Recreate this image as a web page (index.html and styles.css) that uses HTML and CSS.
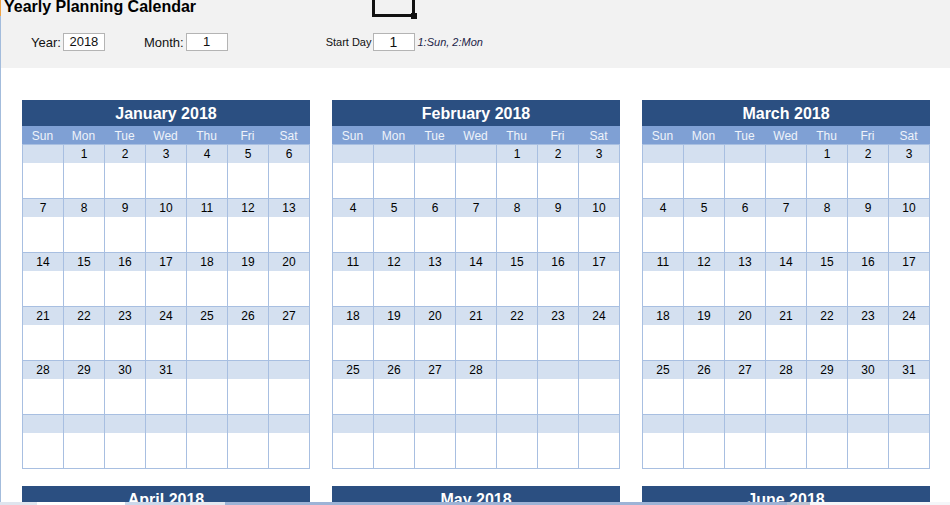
FILE: index.html
```html
<!DOCTYPE html>
<html lang="en">
<head>
<meta charset="utf-8">
<title>Yearly Planning Calendar</title>
<link rel="stylesheet" href="styles.css">
</head>
<body>
<div class="frame">
  <header class="top">
    <h1 class="title">Yearly Planning Calendar</h1>
    <div class="selection"><span class="handle"></span></div>
    <div class="controls">
      <span class="lbl lbl-year">Year:</span>
      <span class="box">2018</span>
      <span class="lbl lbl-month">Month:</span>
      <span class="box">1</span>
      <span class="lbl-small">Start Day</span>
      <span class="box box-start">1</span>
      <span class="hint">1:Sun, 2:Mon</span>
    </div>
  </header>
  <main class="year" id="year"></main>
</div>
<div class="tabs">
  <span class="t t1"></span><span class="t t2"></span><span class="t t3"></span><span class="t t4"></span><span class="t t5"></span><span class="t t6"></span><span class="t t7"></span>
</div>
<script src="script.js"></script>
</body>
</html>
```

FILE: styles.css
```css
html, body {
  margin: 0;
  padding: 0;
}
body {
  width: 950px;
  height: 505px;
  overflow: hidden;
  background: #ffffff;
  font-family: "Liberation Sans", Arial, sans-serif;
  color: #000;
}
.frame {
  padding-left: 1px;
  min-height: 505px;
  background: linear-gradient(#f0a445 0 16px, #a3bcdc 16px) left top / 1px 100% no-repeat;
}
.top {
  position: relative;
  height: 68px;
  background: #f2f2f2;
}
.title {
  margin: 0;
  padding-left: 3px;
  font-size: 16px;
  font-weight: bold;
  line-height: 14px;
  color: #000;
}
.selection {
  position: absolute;
  left: 371px;
  top: -6px;
  width: 43px;
  height: 23px;
  box-sizing: border-box;
  border: 3px solid #111;
}
.handle {
  position: absolute;
  right: -5px;
  bottom: -5px;
  width: 6px;
  height: 6px;
  background: #111;
}
.controls {
  display: flex;
  align-items: center;
  margin-top: 19px;
  padding-left: 30px;
  height: 18px;
}
.lbl {
  font-size: 13px;
  color: #111;
  margin-right: 2px;
}
.lbl-month {
  margin-left: 39px;
}
.lbl-small {
  font-size: 11px;
  color: #111;
  margin-left: 98px;
  margin-right: 1px;
}
.box {
  width: 42px;
  height: 18px;
  box-sizing: border-box;
  border: 1px solid #b4b4b4;
  background: #fff;
  font-size: 13px;
  line-height: 16px;
  text-align: center;
  color: #111;
}
.box-start {
  font-size: 14px;
}
.hint {
  margin-left: 3px;
  font-size: 11px;
  font-style: italic;
  color: #1c2448;
}
.year {
  display: flex;
  flex-wrap: wrap;
  column-gap: 22px;
  row-gap: 17px;
  padding: 32px 0 0 21px;
}
.month {
  width: 288px;
}
.mtitle {
  margin: 0;
  height: 26px;
  background: #2b4f81;
  color: #fff;
  font-size: 16px;
  font-weight: bold;
  line-height: 28px;
  text-align: center;
}
.dow {
  display: grid;
  grid-template-columns: repeat(7, 41px);
  height: 18px;
  background: #7fa0d4;
  padding-right: 1px;
}
.dow span {
  font-size: 12px;
  line-height: 20px;
  height: 18px;
  text-align: center;
  color: #eef3fa;
}
.days {
  display: grid;
  grid-template-columns: repeat(7, 41px);
  border-right: 1px solid #a8bfe1;
  border-bottom: 1px solid #a8bfe1;
}
.cell {
  height: 53px;
  border-left: 1px solid #a8bfe1;
  border-top: 1px solid #a8bfe1;
}
.cell .n {
  display: block;
  height: 18px;
  background: #d4e0f0;
  font-size: 12px;
  line-height: 18px;
  text-align: center;
  color: #000;
}
.tabs {
  position: fixed;
  left: 0;
  bottom: 0;
  width: 950px;
  height: 3px;
  display: flex;
}
.t { display: block; height: 3px; }
.t1 { width: 37px; background: #dfe5ee; }
.t2 { width: 88px; background: #ffffff; }
.t3 { width: 65px; background: #cbd8ea; }
.t4 { width: 35px; background: #e4e9f1; }
.t5 { width: 562px; background: #9db3d6; }
.t6 { width: 23px; background: #b9c4d4; }
.t7 { flex: 1; background: #f4f6f9; }
```

FILE: script.js
```js
(function () {
  var names = ["January", "February", "March", "April", "May", "June"];
  var dows = ["Sun", "Mon", "Tue", "Wed", "Thu", "Fri", "Sat"];
  var year = document.getElementById("year");
  for (var m = 0; m < names.length; m++) {
    var sec = document.createElement("section");
    sec.className = "month";
    var h = document.createElement("h2");
    h.className = "mtitle";
    h.textContent = names[m] + " 2018";
    sec.appendChild(h);
    var dow = document.createElement("div");
    dow.className = "dow";
    for (var d = 0; d < 7; d++) {
      var s = document.createElement("span");
      s.textContent = dows[d];
      dow.appendChild(s);
    }
    sec.appendChild(dow);
    var days = document.createElement("div");
    days.className = "days";
    var start = new Date(2018, m, 1).getDay();
    var count = new Date(2018, m + 1, 0).getDate();
    for (var i = 0; i < 42; i++) {
      var c = document.createElement("div");
      c.className = "cell";
      var n = document.createElement("span");
      n.className = "n";
      var day = i - start + 1;
      if (day >= 1 && day <= count) n.textContent = String(day);
      c.appendChild(n);
      days.appendChild(c);
    }
    sec.appendChild(days);
    year.appendChild(sec);
  }
})();
```
